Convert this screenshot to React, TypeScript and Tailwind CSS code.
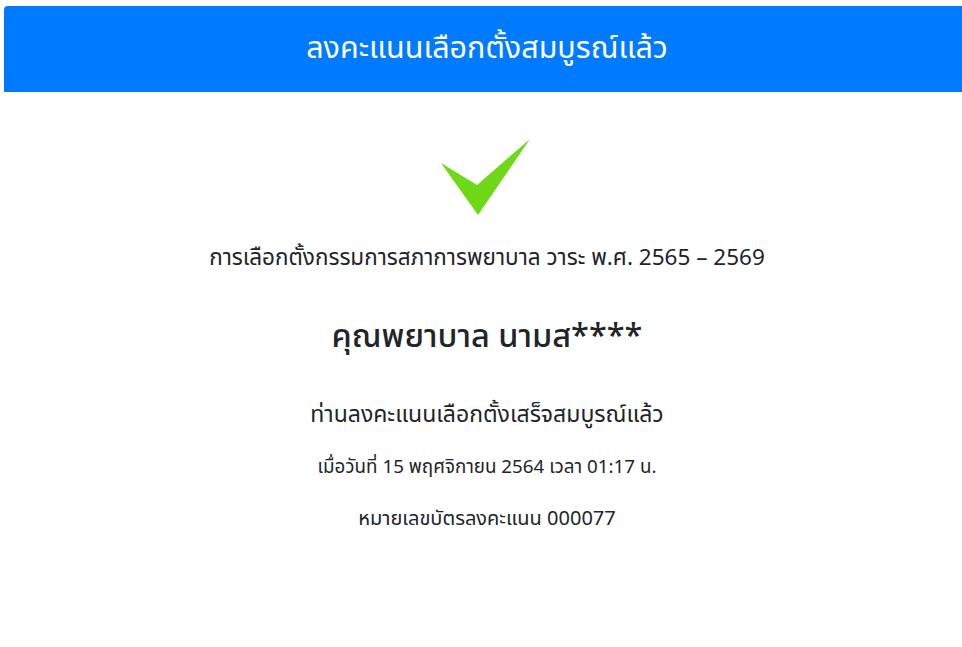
export default function App() {
  return (
    <div
      className="min-h-[647px] w-full bg-white pt-[6px] pl-[4px]"
      style={{ fontFamily: '"Noto Sans Thai", "Noto Sans", sans-serif' }}
    >
      <div className="flex h-[86px] items-center justify-center rounded-tl-[4px] bg-[#007bff]">
        <h1 className="ml-[8px] text-[30.5px] font-normal leading-[40px] text-white">
          ลงคะแนนเลือกตั้งสมบูรณ์แล้ว
        </h1>
      </div>
      <div className="flex flex-col items-center pl-[8px] text-[#212529]">
        <svg className="mt-[47px] -ml-[3px]" width="90" height="77" viewBox="0 0 90 77">
          <polygon points="0,24 37,76 89,0 36,46" fill="#70d917" />
        </svg>
        <p className="mt-[27px] text-[22.5px] leading-[30px]">
          การเลือกตั้งกรรมการสภาการพยาบาล วาระ พ.ศ. 2565 – 2569
        </p>
        <p className="mt-[43px] text-[32.5px] font-medium leading-[44px]">คุณพยาบาล นามส****</p>
        <p className="mt-[39px] text-[23px] leading-[32px]">ท่านลงคะแนนเลือกตั้งเสร็จสมบูรณ์แล้ว</p>
        <p className="mt-[23px] text-[18.8px] leading-[26px]">
          เมื่อวันที่ 15 พฤศจิกายน 2564 เวลา 01:17 น.
        </p>
        <p className="mt-[26px] text-[20px] leading-[26px]">หมายเลขบัตรลงคะแนน 000077</p>
      </div>
    </div>
  );
}
